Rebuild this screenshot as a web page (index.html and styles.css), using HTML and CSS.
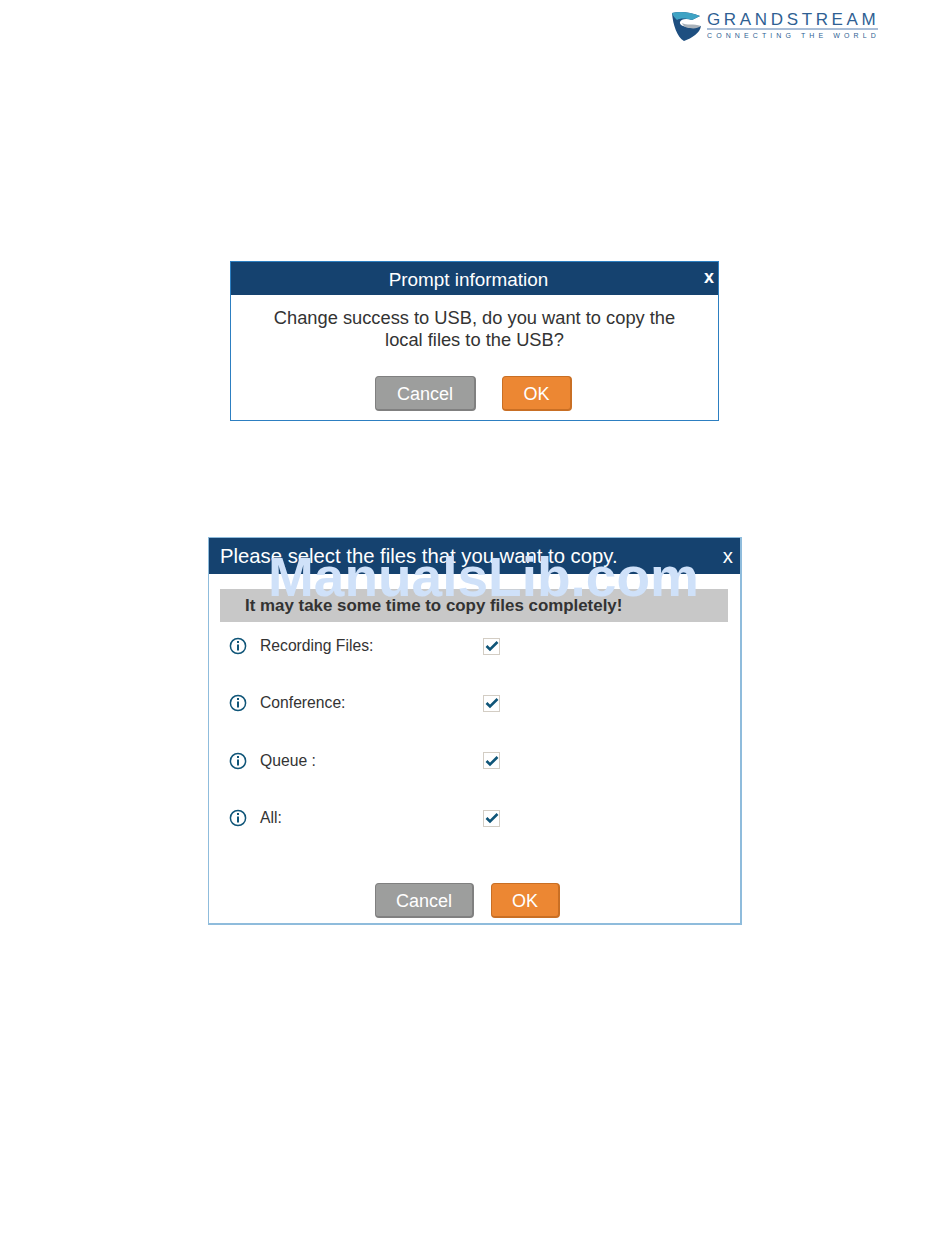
FILE: index.html
```html
<!DOCTYPE html>
<html lang="en">

<head>
    <title>Grandstream</title>
    <meta charset="utf-8">
    <link rel="stylesheet" href="styles.css">
</head>

<body>
    <div class="page">
        <div class="header">
            <div class="logo">
                <svg class="logo-mark" width="30" height="30" viewBox="0 0 30 30">
                    <path d="M0 2 C8 0 18 1 28 5 L20 9 C14 7 9 8 8 11 C7 14 12 16 18 16 L29 15 C28 22 20 27 12 30 C5 26 1 14 0 2Z" fill="#1e4f80"/>
                    <path d="M0 2 C8 0 18 1 28 5 L20 9 C14 7 8 7 5 9 C3 7 1 5 0 2Z" fill="#3fa3c4"/>
                    <path d="M10 12 C14 15 22 12 29 15 C26 17 22 18 18 17 C14 17 11 15 10 12Z" fill="#a9b2ba"/>
                </svg>
                <div class="logo-text">
                    <div class="logo-name">GRANDSTREAM</div>
                    <div class="logo-rule"></div>
                    <div class="logo-tag">CONNECTING THE WORLD</div>
                </div>
            </div>
        </div>

        <div class="dialog dialog-prompt">
            <div class="prompt-title">
                Prompt information
                <span class="close-bold">x</span>
            </div>
            <div class="prompt-body">
                Change success to USB, do you want to copy the<br>
                local files to the USB?
            </div>
            <div class="prompt-buttons">
                <button class="btn btn-cancel prompt-cancel">Cancel</button>
                <button class="btn btn-ok prompt-ok">OK</button>
            </div>
        </div>

        <div class="dialog dialog-copy">
            <div class="copy-title">
                <span>Please select the files that you want to copy.</span>
                <span class="close-plain">x</span>
            </div>
            <div class="notice">It may take some time to copy files completely!</div>
            <div class="rows">
                <div class="row">
                    <svg class="info" width="18" height="18" viewBox="0 0 18 18"><circle cx="9" cy="9" r="7.6"/><rect x="8" y="7.5" width="2" height="6"/><rect x="8" y="4" width="2" height="2"/></svg>
                    <span class="row-label">Recording Files:</span>
                    <span class="check"><svg width="14" height="12" viewBox="0 0 14 12"><path d="M1.5 6 L5 9.5 L12.5 2"/></svg></span>
                </div>
                <div class="row">
                    <svg class="info" width="18" height="18" viewBox="0 0 18 18"><circle cx="9" cy="9" r="7.6"/><rect x="8" y="7.5" width="2" height="6"/><rect x="8" y="4" width="2" height="2"/></svg>
                    <span class="row-label">Conference:</span>
                    <span class="check"><svg width="14" height="12" viewBox="0 0 14 12"><path d="M1.5 6 L5 9.5 L12.5 2"/></svg></span>
                </div>
                <div class="row">
                    <svg class="info" width="18" height="18" viewBox="0 0 18 18"><circle cx="9" cy="9" r="7.6"/><rect x="8" y="7.5" width="2" height="6"/><rect x="8" y="4" width="2" height="2"/></svg>
                    <span class="row-label">Queue :</span>
                    <span class="check"><svg width="14" height="12" viewBox="0 0 14 12"><path d="M1.5 6 L5 9.5 L12.5 2"/></svg></span>
                </div>
                <div class="row">
                    <svg class="info" width="18" height="18" viewBox="0 0 18 18"><circle cx="9" cy="9" r="7.6"/><rect x="8" y="7.5" width="2" height="6"/><rect x="8" y="4" width="2" height="2"/></svg>
                    <span class="row-label">All:</span>
                    <span class="check"><svg width="14" height="12" viewBox="0 0 14 12"><path d="M1.5 6 L5 9.5 L12.5 2"/></svg></span>
                </div>
            </div>
            <div class="copy-buttons">
                <button class="btn btn-cancel copy-cancel">Cancel</button>
                <button class="btn btn-ok copy-ok">OK</button>
            </div>
        </div>

        <div class="watermark">ManualsLib.com</div>
    </div>
</body>

</html>
```

FILE: styles.css
```css
body {
    margin: 0;
    padding: 0;
    background-color: white;
    font-family: "Liberation Sans", Arial, sans-serif;
}

.page {
    position: relative;
    width: 950px;
    height: 1260px;
    overflow: hidden;
}

/* logo */
.header {
    display: flex;
    justify-content: flex-end;
    padding: 11px 72px 0 0;
    height: 250px;
}

.logo {
    display: flex;
    align-items: flex-start;
    gap: 5px;
    height: 30px;
}

.logo-text {
    width: 171px;
    color: #2f5f93;
}

.logo-name {
    font-size: 17px;
    line-height: 15px;
    padding-top: 1px;
    letter-spacing: 3.65px;
    white-space: nowrap;
}

.logo-rule {
    height: 2px;
    margin-top: 1px;
    background-color: #a9bdd6;
}

.logo-tag {
    font-size: 7px;
    line-height: 9px;
    margin-top: 1px;
    letter-spacing: 4.1px;
    white-space: nowrap;
}

/* dialogs */
.dialog {
    box-sizing: border-box;
    background-color: white;
}

.dialog-prompt {
    width: 489px;
    height: 160px;
    margin-left: 230px;
    border: 1px solid #2d7fc1;
}

.prompt-title {
    position: relative;
    height: 33px;
    line-height: 35px;
    padding-right: 12px;
    background-color: #15426f;
    color: white;
    font-size: 18.9px;
    text-align: center;
}

.close-bold {
    position: absolute;
    right: 4px;
    top: -2px;
    font-size: 18px;
    font-weight: bold;
}

.prompt-body {
    padding-top: 12px;
    height: 70px;
    box-sizing: border-box;
    font-size: 18.3px;
    line-height: 22px;
    color: #333333;
    text-align: center;
}

.prompt-buttons {
    display: flex;
    padding: 11px 0 0 144px;
    gap: 26px;
}

.btn {
    box-sizing: border-box;
    padding: 2px 0 0 0;
    border-radius: 4px;
    color: white;
    font-family: "Liberation Sans", Arial, sans-serif;
    font-size: 18px;
}

.btn-cancel {
    background-color: #9d9e9d;
    border: 1px solid #808080;
    border-width: 1px 2px 2px 1px;
}

.btn-ok {
    background-color: #ec8733;
    border: 1px solid #c96f24;
    border-width: 1px 2px 2px 1px;
}

.prompt-cancel {
    width: 101px;
    height: 35px;
}

.prompt-ok {
    width: 70px;
    height: 35px;
}

.dialog-copy {
    width: 534px;
    height: 388px;
    margin-top: 116px;
    margin-left: 208px;
    border: 1px solid #8fbcdc;
    border-width: 1px 2px 2px 1px;
}

.copy-title {
    display: flex;
    justify-content: space-between;
    height: 36px;
    line-height: 36px;
    padding: 0 7px 0 11px;
    background-color: #15426f;
    color: white;
    font-size: 20.3px;
}

.notice {
    height: 33px;
    line-height: 33px;
    margin: 15px 12px 0 11px;
    padding-left: 25px;
    background-color: #c8c8c8;
    color: #333333;
    font-size: 16.9px;
    font-weight: bold;
}

.rows {
    height: 261px;
    padding-top: 4px;
    box-sizing: border-box;
}

.row {
    display: flex;
    align-items: center;
    height: 40px;
    margin-bottom: 17.4px;
    padding-left: 20px;
    font-size: 15.7px;
    color: #333333;
}

.info {
    flex: none;
    fill: #0f5578;
}

.info circle {
    fill: none;
    stroke: #0f5578;
    stroke-width: 1.5;
}

.row-label {
    width: 223px;
    margin-left: 13px;
}

.check {
    box-sizing: border-box;
    display: flex;
    align-items: center;
    justify-content: center;
    width: 17px;
    height: 17px;
    border: 1px solid #d3cdc4;
}

.check path {
    fill: none;
    stroke: #0f5578;
    stroke-width: 2.6;
}

.copy-buttons {
    display: flex;
    gap: 17px;
    padding-left: 166px;
}

.copy-cancel {
    width: 99px;
    height: 35px;
}

.copy-ok {
    width: 69px;
    height: 35px;
}

/* sits across the second dialog */
.watermark {
    position: absolute;
    left: 268px;
    top: 545px;
    color: #cfe1f9;
    font-size: 55px;
    line-height: 64px;
    font-weight: bold;
    white-space: nowrap;
}
```
